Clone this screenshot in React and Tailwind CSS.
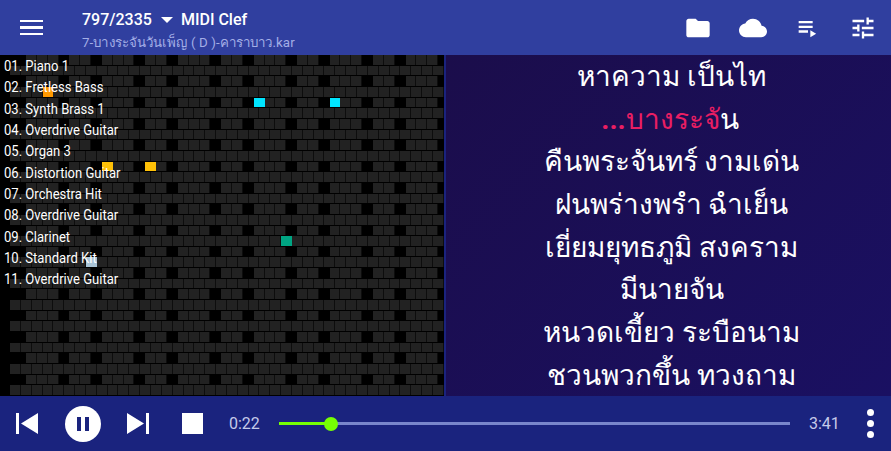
const TRACKS = ["01. Piano 1","02. Fretless Bass","03. Synth Brass 1","04. Overdrive Guitar","05. Organ 3","06. Distortion Guitar","07. Orchestra Hit","08. Overdrive Guitar","09. Clarinet","10. Standard Kit","11. Overdrive Guitar"];
const LYRICS = ["หาความ เป็นไท",null,"คืนพระจันทร์ งามเด่น","ฝนพร่างพรำ ฉำเย็น","เยี่ยมยุทธภูมิ สงคราม","มีนายจัน","หนวดเขี้ยว ระบือนาม","ชวนพวกขึ้น ทวงถาม"];
const NOTES = { "3:3":"bg-[#ff9800]", "4:21":"bg-[#00e5ff]", "4:28":"bg-[#00e5ff]", "10:7":"bg-[#ffc107]", "10:11":"bg-[#ffc107]", "17:25":"bg-[#00a583]", "19:7":"bg-[#a9c4d6]" };
const BLACK = [1,1,1,0,1,1,0];
function Cell({ on, color }) {
  return <div className={"w-[10.857px] h-full shrink-0 " + (color ? "" : "pr-px ") + (on ? "bg-[#0d0d0d]" : "")}>
    <div className={"h-full " + (color ? color : on ? "bg-[#222222]" : "")}></div>
  </div>;
}
function Row({ idx }) {
  const black = idx % 2 === 0;
  const cells = [];
  for (let i = 0; i < 40; i++) {
    const on = black ? BLACK[i % 7] === 1 : true;
    cells.push(<Cell key={i} on={on} color={NOTES[idx + ":" + i]} />);
  }
  return <div className={"flex h-[10.66px] pb-px overflow-hidden " + (black ? "pl-[26px]" : "pl-[10px]")}>{cells}</div>;
}
const Ic = ({ d, s = 28 }) => <svg width={s} height={s} viewBox="0 0 24 24" fill="white"><path d={d} /></svg>;
export default function App() {
  return (
    <div className="w-[891px] h-[451px] flex flex-col overflow-hidden bg-black font-['Roboto',sans-serif]">
      <header className="h-[55px] shrink-0 bg-[#303f9f] flex items-center text-white">
        <div className="w-[82px] pl-[20px] shrink-0">
          <div className="w-[23px] flex flex-col gap-[4px]">
            <div className="h-[2.5px] bg-white"></div><div className="h-[2.5px] bg-white"></div><div className="h-[2.5px] bg-white"></div>
          </div>
        </div>
        <div className="flex-1 flex flex-col gap-[4px] pt-[5px] min-w-0">
          <div className="flex items-center text-[16px] leading-[20px] font-medium">
            <span>797/2335</span>
            <svg width="12" height="6" viewBox="0 0 12 6" className="ml-[9px] mr-[8px]" fill="white"><path d="M0 0h12L6 6z" /></svg>
            <span>MIDI Clef</span>
          </div>
          <div className="text-[13.3px] tracking-[0.1px] leading-[17px] text-[#a3aee6]">7-บางระจันวันเพ็ญ ( D )-คาราบาว.kar</div>
        </div>
        <div className="flex pr-px">
          {["M10 4H4c-1.1 0-1.99.9-1.99 2L2 18c0 1.1.9 2 2 2h16c1.1 0 2-.9 2-2V8c0-1.1-.9-2-2-2h-8l-2-2z",
            "M19.35 10.04C18.67 6.59 15.64 4 12 4 9.11 4 6.6 5.64 5.35 8.04 2.34 8.36 0 10.91 0 14c0 3.31 2.69 6 6 6h13c2.76 0 5-2.24 5-5 0-2.64-2.05-4.78-4.65-4.96z",
            "M4 10h12v2H4zm0-4h12v2H4zm0 8h8v2H4zm10 0v6l5-3z",
            "M3 17v2h6v-2H3zM3 5v2h10V5H3zm10 16v-2h8v-2h-8v-2h-2v6h2zM7 9v2H3v2h4v2h2V9H7zm14 4v-2H11v2h10zm-6-4h2V7h4V5h-4V3h-2v6z"].map((d) => (
            <div key={d} className="w-[55px] flex justify-center"><Ic d={d} /></div>
          ))}
        </div>
      </header>
      <main className="h-[341px] shrink-0 flex">
        <section className="relative w-[444px] shrink-0 bg-black overflow-hidden">
          {Array.from({ length: 32 }, (_, i) => <Row key={i} idx={i} />)}
          <ul className="absolute left-[4px] top-px origin-left scale-x-[0.87] text-white text-[15px] leading-[21.33px]">
            {TRACKS.map((t) => <li key={t}>{t}</li>)}
          </ul>
        </section>
        <section className="flex-1 border-l-2 border-[#1a237e] bg-[linear-gradient(135deg,#1b0d4b,#1a1062)] overflow-hidden pl-[6px] text-center text-white text-[28px] leading-[42.66px]">
          <div className="pt-px">
          {LYRICS.map((l, i) => l ? <div key={i}>{l}</div> : (
            <div key={i} className="pr-[3px]"><span className="text-[#e91e63]"><b>...</b>บางระจั</span>น</div>
          ))}
          </div>
        </section>
      </main>
      <footer className="h-[55px] shrink-0 bg-[#1a237e] flex items-center text-[#c5cae9] text-[16px]">
        <div className="w-[65px] pl-[16px] shrink-0">
          <svg width="22" height="21" viewBox="0 0 22 21" fill="white"><path d="M0 0h3v21H0zM22 0v21L5 10.5z" /></svg>
        </div>
        <div className="w-[36px] h-[36px] rounded-full bg-white flex items-center justify-center shrink-0">
          <svg width="12" height="14" viewBox="0 0 12 14" fill="#1a237e"><path d="M0 0h4v14H0zM8 0h4v14H8z" /></svg>
        </div>
        <div className="pl-[26px] w-[81px] shrink-0">
          <svg width="22" height="21" viewBox="0 0 22 21" fill="white"><path d="M19 0h3v21h-3zM0 0v21l17-10.5z" /></svg>
        </div>
        <div className="w-[21px] h-[21px] bg-white shrink-0"></div>
        <span className="ml-[26px] w-[50px] shrink-0">0:22</span>
        <div className="relative w-[511px] h-[3px] bg-[#7986cb] shrink-0">
          <div className="h-full w-[52px] bg-[#76ff03]"></div>
          <div className="absolute left-[45px] top-[-5.5px] w-[14px] h-[14px] rounded-full bg-[#76ff03]"></div>
        </div>
        <span className="ml-[19px] w-[46px] shrink-0">3:41</span>
        <div className="flex flex-col gap-[4px] shrink-0 ml-[12px]">
          <div className="w-[7px] h-[7px] rounded-full bg-white"></div>
          <div className="w-[7px] h-[7px] rounded-full bg-white"></div>
          <div className="w-[7px] h-[7px] rounded-full bg-white"></div>
        </div>
      </footer>
    </div>
  );
}
